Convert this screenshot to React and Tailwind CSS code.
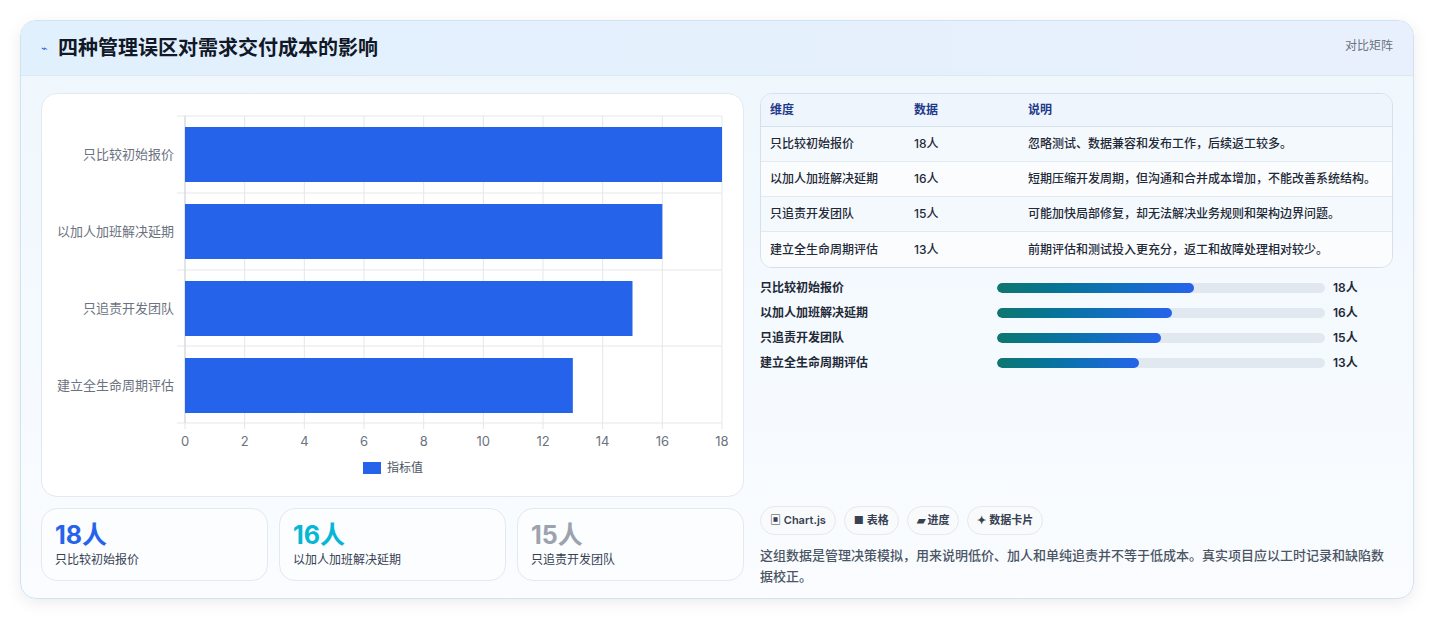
const F = { fontFamily: 'Inter, "Noto Sans CJK SC", sans-serif' };
const rows = [
  ["只比较初始报价", 18, "忽略测试、数据兼容和发布工作，后续返工较多。"],
  ["以加人加班解决延期", 16, "短期压缩开发周期，但沟通和合并成本增加，不能改善系统结构。"],
  ["只追责开发团队", 15, "可能加快局部修复，却无法解决业务规则和架构边界问题。"],
  ["建立全生命周期评估", 13, "前期评估和测试投入更充分，返工和故障处理相对较少。"],
];
function Chart() {
  const x0 = 143, w = 537, ticks = [0,2,4,6,8,10,12,14,16,18];
  return (
    <svg width="703" height="403" className="block">
      {ticks.map((t) => { const x = x0 + (t / 18) * w; return (
        <g key={t}>
          <line x1={x} y1="22" x2={x} y2="335" stroke="#e5e7eb" />
          <text x={x} y="352" textAnchor="middle" fontSize="13" fill="#6b7280">{t}</text>
        </g>);})}
      {[22,99,176,252,329].map((y) => <line key={y} x1={x0-8} y1={y} x2={x0+w} y2={y} stroke="#e5e7eb" />)}
      <line x1={x0} y1="22" x2={x0} y2="329" stroke="#d1d5db" />
      {rows.map((r, i) => { const y = 33 + i * 77; return (
        <g key={i}>
          <rect x={x0} y={y} width={(r[1]/18)*w} height="55" fill="#2563eb" />
          <text x={x0-11} y={y+32} textAnchor="end" fontSize="13" fill="#6b7280">{r[0]}</text>
        </g>);})}
      <rect x="321" y="368" width="18" height="12" fill="#2563eb" />
      <text x="345" y="378" fontSize="12" fill="#4b5563">指标值</text>
    </svg>
  );
}
export default function App() {
  return (
    <div style={F} className="w-[1435px] h-[620px] bg-white pt-5 px-5">
      <div className="w-[1394px] h-[579px] rounded-2xl border border-[#cfe3f0] shadow-[0_4px_16px_rgba(0,0,0,0.08)] bg-gradient-to-b from-[#eef7fd] to-[#fafcff] overflow-hidden">
        <div className="h-[55px] bg-gradient-to-r from-[#e1f0fd] to-[#e9f0fd] border-b border-[#d8e8f5] flex items-center justify-between px-5">
          <div className="flex items-center gap-2.5">
            <span className="text-[#2563eb] text-[11px]">⌁</span>
            <span className="text-[20px] font-bold text-[#111827]">四种管理误区对需求交付成本的影响</span>
          </div>
          <span className="text-[12px] text-[#6b7280] self-start mt-4">对比矩阵</span>
        </div>
        <div className="flex gap-4 px-5 pt-[17px]">
          <div className="w-[703px] flex flex-col gap-[11px]">
            <div className="h-[404px] bg-white rounded-2xl border border-[#e3e9f0]"><Chart /></div>
            <div className="flex gap-[11px]">
              {[["18人","text-[#2563eb]","只比较初始报价"],["16人","text-[#06b6d4]","以加人加班解决延期"],["15人","text-[#9ca3af]","只追责开发团队"]].map(([v,c,l]) => (
                <div key={l} className="flex-1 h-[73px] rounded-2xl border border-[#e3e9f0] bg-[#fbfdff] px-[13px] pt-[10px]">
                  <div className={`text-[25px] font-bold leading-[32px] ${c}`}>{v}</div>
                  <div className="text-[12px] text-[#374151]">{l}</div>
                </div>))}
            </div>
          </div>
          <div className="flex-1 flex flex-col">
            <div className="rounded-xl border border-[#d6e0ea] overflow-hidden">
              <div className="flex h-[33px] items-center bg-[#eff5fd] border-b border-[#d6e0ea] text-[12px] font-semibold text-[#1e3a8a]">
                <div className="w-[153px] pl-[9px]">维度</div><div className="w-[114px]">数据</div><div>说明</div>
              </div>
              {rows.map((r, i) => (
                <div key={i} className={`flex h-[35px] items-center text-[12px] font-medium text-[#1f2937] ${i < 3 ? "border-b border-[#e3e9f0]" : ""} ${i % 2 ? "bg-[#fafcfe]" : "bg-[#f4f9fd]"}`}>
                  <div className="w-[153px] pl-[9px]">{r[0]}</div><div className="w-[114px]">{r[1]}人</div><div>{r[2]}</div>
                </div>))}
            </div>
            <div className="flex flex-col gap-[8px] mt-[11px]">
              {rows.map((r) => (
                <div key={r[0]} className="flex items-center h-[17px] text-[12px] font-semibold text-[#1f2937]">
                  <div className="w-[237px]">{r[0]}</div>
                  <div className="w-[328px] h-[10px] rounded-full bg-[#e2e8f0] overflow-hidden">
                    <div className="h-full rounded-full bg-gradient-to-r from-[#0f766e] to-[#2563eb]" style={{ width: `${(r[1] / 30) * 100}%` }} />
                  </div>
                  <div className="ml-[8px]">{r[1]}人</div>
                </div>))}
            </div>
            <div className="mt-[135px] flex gap-2 text-[11px] font-semibold text-[#374151]">
              {["▣ Chart.js","■ 表格","▰ 进度","✦ 数据卡片"].map((t) => (
                <span key={t} className="h-[29px] px-[9px] flex items-center rounded-full border border-[#e3e9f0] bg-[#f8fafc]">{t}</span>))}
            </div>
            <p className="mt-[10px] text-[13px] leading-[21px] text-[#4b5563] font-medium">这组数据是管理决策模拟，用来说明低价、加人和单纯追责并不等于低成本。真实项目应以工时记录和缺陷数据校正。</p>
          </div>
        </div>
      </div>
    </div>
  );
}
